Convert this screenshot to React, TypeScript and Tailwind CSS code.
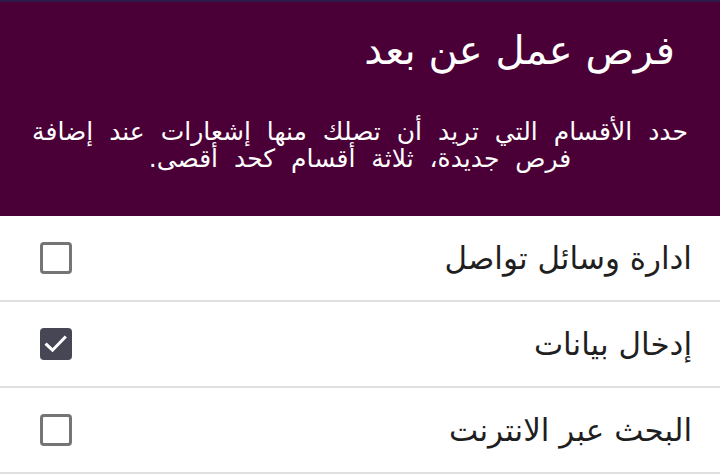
import React, { useState } from "react";

const items = [
  { label: "ادارة وسائل تواصل", checked: false },
  { label: "إدخال بيانات", checked: true },
  { label: "البحث عبر الانترنت", checked: false },
];

function Box({ checked }: { checked: boolean }) {
  if (checked) {
    return (
      <div className="w-[32px] h-[32px] rounded-[4px] bg-[#464655] flex items-center justify-center">
        <svg width="28" height="28" viewBox="0 0 24 24" fill="none">
          <path d="M4 12.5l5 4.8L19.5 6.5" stroke="#ffffff" strokeWidth="2.6" strokeLinecap="square" />
        </svg>
      </div>
    );
  }
  return <div className="w-[32px] h-[32px] rounded-[4px] border-[3px] border-[#757575] bg-white" />;
}

export default function App() {
  const [state, setState] = useState(items.map((i) => i.checked));
  return (
    <div dir="rtl" className="w-[720px] h-[475px] bg-white overflow-hidden" style={{ fontFamily: '"DejaVu Sans", sans-serif' }}>
      <div className="h-[2px] bg-[#2c1a4c]" />
      <div className="bg-[#4a0036] h-[214px] text-white flex flex-col">
        <h1 className="text-[40px] leading-none pr-[45px] pt-[28px] font-normal">فرص عمل عن بعد</h1>
        <p className="mt-[48px] text-center text-[25px] leading-[27px] px-[10px] [word-spacing:8px]">
          <span className="whitespace-nowrap">حدد الأقسام التي تريد أن تصلك منها إشعارات عند إضافة</span>
          <br />
          <span className="whitespace-nowrap">فرص جديدة، ثلاثة أقسام كحد أقصى.</span>
        </p>
      </div>
      {items.map((it, i) => (
        <div
          key={i}
          className="h-[86px] border-b-2 border-[#e0e0e0] flex items-center justify-between pr-[28px] pl-[40px] cursor-pointer"
          onClick={() => setState((s) => s.map((v, j) => (j === i ? !v : v)))}
        >
          <span className="text-[31px] text-[#1f1f1f]">{it.label}</span>
          <Box checked={state[i]} />
        </div>
      ))}
    </div>
  );
}
